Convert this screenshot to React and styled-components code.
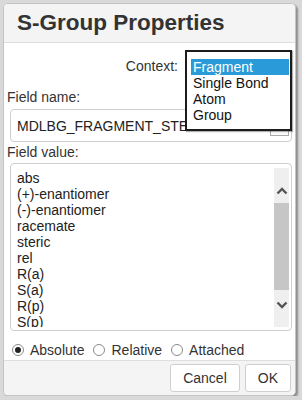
import React from "react";
import styled, { createGlobalStyle } from "styled-components";

const GlobalStyle = createGlobalStyle`
  html, body {
    margin: 0;
    padding: 0;
    background: #d9d9d9;
    font-family: "Liberation Sans", Arial, sans-serif;
    color: #333;
  }
`;

const Dialog = styled.div`
  box-sizing: border-box;
  width: 293px;
  height: 393px;
  margin: 3px 0 0 3px;
  background: #fff;
  border: 1px solid #c4c4c4;
  border-radius: 5px;
  box-shadow: 2px 2px 2px rgba(0, 0, 0, 0.35);
  display: flex;
  flex-direction: column;
  overflow: hidden;
`;

const Header = styled.div`
  padding: 8px 13px;
  background: #f4f4f4;
  border-bottom: 1px solid #dedede;
`;

const Title = styled.h1`
  margin: 0;
  font-size: 22.5px;
  line-height: 22px;
  font-weight: bold;
  color: #333;
`;

const Body = styled.div`
  flex: 1;
  padding: 15px 3px 0 3px;
  font-size: 14px;
  line-height: 16px;
`;

const ContextRow = styled.div`
  display: flex;
  justify-content: flex-end;
  gap: 7px;
`;

const SelectWrap = styled.div`
  position: relative;
  width: 107px;
  height: 16px;
`;

const DropList = styled.ul`
  position: absolute;
  top: -8px;
  left: 0;
  z-index: 2;
  box-sizing: border-box;
  width: 107px;
  height: 81px;
  margin: 0;
  padding: 7px 1px 0 4px;
  list-style: none;
  background: #fff;
  border: 2px solid #1c1c1c;
  box-shadow: 1px 1px 1px rgba(0, 0, 0, 0.3);
`;

const Option = styled.li`
  height: 16px;
  padding-left: 2px;
  background: ${(p) => (p.selected ? "#2b9ad8" : "transparent")};
  color: ${(p) => (p.selected ? "#fff" : "#111")};
`;

const Label = styled.div`
  margin-top: ${(p) => p.top}px;
`;

const InputBox = styled.div`
  position: relative;
  box-sizing: border-box;
  height: 33px;
  margin: 4px 0 0 3px;
  padding: 0 6px;
  display: flex;
  align-items: center;
  border: 1px solid #cfcfcf;
  border-radius: 4px;
  white-space: nowrap;
  overflow: hidden;
  color: #222;
`;

const ComboButton = styled.span`
  position: absolute;
  right: 2px;
  bottom: 5px;
  width: 17px;
  height: 22px;
  border: 1px solid #aaa;
  background: #fafafa;
`;

const ValueList = styled.div`
  box-sizing: border-box;
  height: 168px;
  margin: 3px 0 0 3px;
  padding: 6px 2px 3px 6px;
  display: flex;
  gap: 4px;
  border: 1px solid #cfcfcf;
  border-radius: 4px;
  overflow: hidden;
`;

const Items = styled.div`
  flex: 1;
  overflow: hidden;
  color: #222;
`;

const Item = styled.div`
  height: 16px;
`;

const Scrollbar = styled.div`
  width: 15px;
  margin-top: -2px;
  background: #efefef;
  display: flex;
  flex-direction: column;
`;

const ArrowBtn = styled.div`
  height: ${(p) => p.h}px;
  display: flex;
  justify-content: center;
  align-items: flex-start;
  padding-top: ${(p) => p.pad}px;
  box-sizing: border-box;
`;

const Thumb = styled.div`
  height: 87px;
  background: #c6c6c6;
`;

const RadioRow = styled.div`
  display: flex;
  align-items: center;
  margin: 11px 0 0 5px;
`;

const RadioLabel = styled.label`
  display: flex;
  align-items: center;
  gap: 6px;
  margin-right: 9px;
`;

const Circle = styled.span`
  box-sizing: border-box;
  width: 12px;
  height: 12px;
  border-radius: 50%;
  border: 1px solid #8a8a8a;
  background: #fff;
  display: flex;
  align-items: center;
  justify-content: center;
  &::after {
    content: "";
    width: 6px;
    height: 6px;
    border-radius: 50%;
    background: ${(p) => (p.checked ? "#222" : "transparent")};
  }
`;

const Footer = styled.div`
  display: flex;
  justify-content: flex-end;
  gap: 5px;
  padding: 3px 4px 3px 0;
  background: #f4f4f4;
  border-top: 1px solid #dedede;
`;

const Button = styled.button`
  height: 28px;
  padding: 0 12px;
  font-family: "Liberation Sans", Arial, sans-serif;
  font-size: 14px;
  color: #333;
  background: #fff;
  border: 1px solid #cfcfcf;
  border-radius: 3px;
`;

const Chevron = ({ up }) => (
  <svg width="12" height="8" viewBox="0 0 12 8">
    <polyline
      points={up ? "1.5,6.5 6,2 10.5,6.5" : "1.5,1.5 6,6 10.5,1.5"}
      fill="none"
      stroke="#555"
      strokeWidth="2.4"
    />
  </svg>
);

const values = [
  "abs",
  "(+)-enantiomer",
  "(-)-enantiomer",
  "racemate",
  "steric",
  "rel",
  "R(a)",
  "S(a)",
  "R(p)",
  "S(p)",
];

const contexts = ["Fragment", "Single Bond", "Atom", "Group"];

const App = () => {
  return (
    <>
      <GlobalStyle />
      <Dialog>
        <Header>
          <Title>S-Group Properties</Title>
        </Header>
        <Body>
          <ContextRow>
            <span>Context:</span>
            <SelectWrap>
              <DropList>
                {contexts.map((c, i) => (
                  <Option key={c} selected={i === 0}>
                    {c}
                  </Option>
                ))}
              </DropList>
            </SelectWrap>
          </ContextRow>
          <Label top={15}>Field name:</Label>
          <InputBox>
            MDLBG_FRAGMENT_STEREO
            <ComboButton />
          </InputBox>
          <Label top={2}>Field value:</Label>
          <ValueList>
            <Items>
              {values.map((v) => (
                <Item key={v}>{v}</Item>
              ))}
            </Items>
            <Scrollbar>
              <ArrowBtn h={35} pad={19}>
                <Chevron up />
              </ArrowBtn>
              <Thumb />
              <ArrowBtn h={37} pad={11}>
                <Chevron />
              </ArrowBtn>
            </Scrollbar>
          </ValueList>
          <RadioRow>
            <RadioLabel>
              <Circle checked />
              Absolute
            </RadioLabel>
            <RadioLabel>
              <Circle />
              Relative
            </RadioLabel>
            <RadioLabel>
              <Circle />
              Attached
            </RadioLabel>
          </RadioRow>
        </Body>
        <Footer>
          <Button>Cancel</Button>
          <Button>OK</Button>
        </Footer>
      </Dialog>
    </>
  );
};

export default App;
